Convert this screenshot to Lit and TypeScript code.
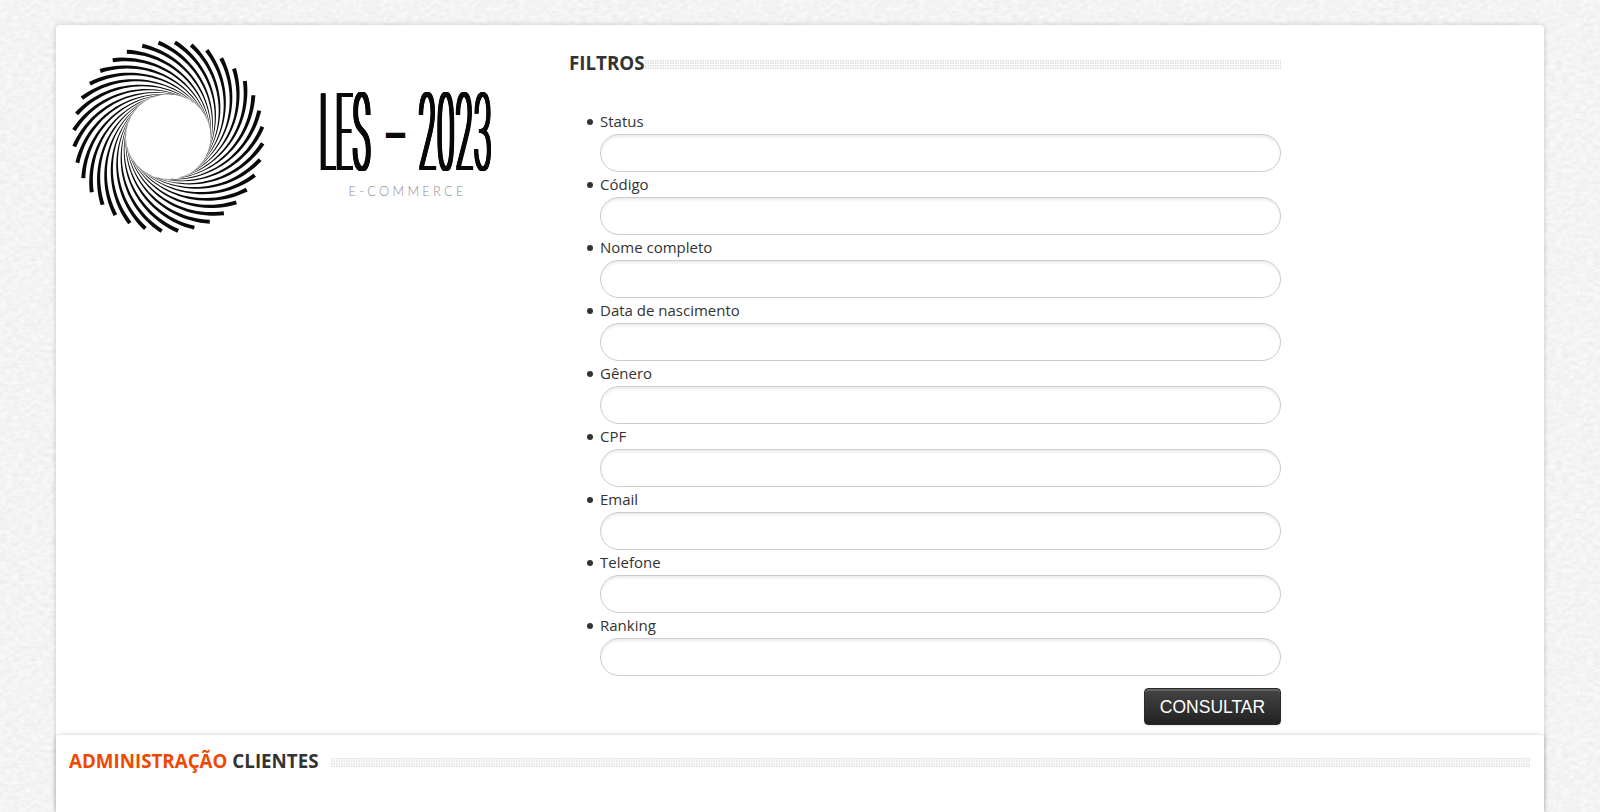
import { LitElement, html, svg, css, unsafeCSS } from "lit";
import { customElement } from "lit/decorators.js";

const FIELDS = ["Status", "Código", "Nome completo", "Data de nascimento", "Gênero", "CPF", "Email", "Telefone", "Ranking"];

const R = 94.6, INNER = 42.3, RHO = 88, D = RHO - INNER;
const TIP = Math.acos((R * R - RHO * RHO - D * D) / (2 * RHO * D));
const TIP_DEG = (Math.atan2(RHO * Math.sin(TIP), D + RHO * Math.cos(TIP)) * 180) / Math.PI;

/** One tapered blade of the swirl, starting at the rim and ending tangent to the inner ring. */
function blade(): string {
  const a: string[] = [], b: string[] = [];
  const n = 28;
  for (let i = 0; i <= n; i++) {
    const t = i / n;
    const ang = TIP + (Math.PI - TIP) * t;
    const w = 1.95 * Math.pow(1 - t, 1.1) + 0.06;
    const p = (q: number) => (D + q * Math.cos(ang)).toFixed(2) + "," + (q * Math.sin(ang)).toFixed(2);
    a.push(p(RHO + w));
    b.unshift(p(RHO - w));
  }
  return "M" + a.concat(b).join("L") + "Z";
}

/** Horizontal shadows that thicken only the vertical stems of the condensed lettering. */
const stems = (to: number) => unsafeCSS(Array.from({ length: to }, (_, i) => `${i + 1}px 0 #0a0a0a`).join(", "));

@customElement("brand-logo")
export class BrandLogo extends LitElement {
  static styles = css`
    :host { display: flex; align-items: flex-start; }
    svg { display: block; }
    .mark { flex: none; }
    .name { padding: 54px 0 0 22px; width: 200px; color: #0a0a0a; }
    .row { display: flex; height: 98px; }
    .word { display: block; white-space: nowrap; font: 200 108px/108px "Roboto", sans-serif; transform-origin: 0 0; }
    .les { width: 66px; }
    .les .word { transform: scaleX(.265); letter-spacing: 4px; text-shadow: ${stems(14)}; }
    .dash { width: 33px; font: 700 46px/102px "Open Sans", sans-serif; }
    .year { width: 76px; }
    .year .word { transform: scaleX(.292); letter-spacing: 3.8px; text-shadow: ${stems(11)}; }
    .sub { font-family: "Lato", sans-serif; font-weight: 300; font-size: 12.8px; fill: #8c8c8c; }
  `;
  render() {
    const d = blade();
    return html`
      <svg class="mark" width="240" height="230" viewBox="56 25 240 230">
        <g transform="translate(168.3 136.7)" fill="#0a0a0a">
          ${Array.from({ length: 36 }, (_, i) => svg`<path d=${d} transform="rotate(${(i * 10 - 86 - TIP_DEG).toFixed(2)})"></path>`)}
        </g>
      </svg>
      <div class="name">
        <div class="row">
          <div class="les"><span class="word">LES</span></div>
          <div class="dash">–</div>
          <div class="year"><span class="word">2023</span></div>
        </div>
        <svg width="180" height="26"><text class="sub" x="30.5" y="18.5" textLength="115" lengthAdjust="spacing">E-COMMERCE</text></svg>
      </div>`;
  }
}

@customElement("app-root")
export class AppRoot extends LitElement {
  static styles = css`
    :host {
      display: block; height: 812px; overflow: hidden; box-sizing: border-box; padding: 25px 56px 0;
      font-family: "Open Sans", sans-serif; font-size: 15px; line-height: 25px; color: #333;
      background: #f3f3f3 url("data:image/svg+xml,%3Csvg xmlns='http://www.w3.org/2000/svg' width='400' height='400'%3E%3Cfilter id='g' x='0' y='0' width='100%25' height='100%25' color-interpolation-filters='sRGB'%3E%3CfeTurbulence type='fractalNoise' baseFrequency='.16 .26' numOctaves='4' stitchTiles='stitch'/%3E%3CfeColorMatrix values='.08 0 0 0 .915 .08 0 0 0 .915 .08 0 0 0 .915 0 0 0 0 1'/%3E%3C/filter%3E%3Crect width='400' height='400' filter='url(%23g)'/%3E%3C/svg%3E");
    }
    .page { display: flex; flex-direction: column; height: 787px; background: #fff; border-radius: 4px 4px 0 0; box-shadow: 0 0 5px rgba(0,0,0,.2); }
    .top { display: flex; height: 710px; }
    .brand { width: 513px; }
    .filters { width: 712px; padding-top: 25px; box-sizing: border-box; }
    .title { margin: 0; height: 27px; font-size: 18.75px; line-height: 25px; font-weight: 700; text-transform: uppercase; display: flex; align-items: flex-start; white-space: nowrap; }
    .dots {
      flex: 1; height: 9px; margin-top: 10px;
      background: url("data:image/svg+xml,%3Csvg xmlns='http://www.w3.org/2000/svg' width='5' height='5' shape-rendering='crispEdges'%3E%3Cpath fill='%23f6f6f6' d='M0 0h4v4H0z'/%3E%3Cpath fill='%23ededed' d='M1 0h2v1H1zM1 3h2v1H1zM0 1h1v2H0zM3 1h1v2H3z'/%3E%3Cpath fill='%23dedede' d='M0 0h1v1H0zM3 0h1v1H3zM0 3h1v1H0zM3 3h1v1H3z'/%3E%3C/svg%3E");
    }
    ul { margin: 32px 0 0; padding: 0 0 0 31px; list-style: none; }
    li { height: 63px; }
    label { display: flex; align-items: center; height: 25px; }
    label::before { content: ""; width: 6px; height: 6px; margin: 1px 7px 0 -13px; border-radius: 50%; background: #333; }
    input { display: block; box-sizing: border-box; width: 100%; height: 38px; margin: 0; border: 1px solid #ccc; border-radius: 19px; background: #fff; box-shadow: inset 0 3px 3px -1px rgba(0,0,0,.08); outline: 0; padding: 0 15px; }
    .actions { display: flex; justify-content: flex-end; margin-top: 12px; }
    button { width: 137px; height: 37px; padding: 1px 0 0; border: 1px solid #2a2a2a; border-radius: 4px; color: #fff; font: 17.5px "Liberation Sans", Arial, sans-serif; background: linear-gradient(#444, #222); box-shadow: inset 0 2px 0 rgba(255,255,255,.17), 0 1px 2px rgba(0,0,0,.1); }
    .admin { flex: 1; padding: 13px 13px 0; box-shadow: 0 0 5px rgba(0,0,0,.2); border-radius: 4px 4px 0 0; }
    .accent { color: #f04800; }
    .admin .title { gap: 12px; }
  `;
  render() {
    return html`
      <main class="page">
        <section class="top">
          <brand-logo class="brand"></brand-logo>
          <div class="filters">
            <h2 class="title"><span>Filtros</span><span class="dots"></span></h2>
            <ul>${FIELDS.map((f) => html`<li><label for=${f}>${f}</label><input id=${f} type="text" /></li>`)}</ul>
            <div class="actions"><button type="button">CONSULTAR</button></div>
          </div>
        </section>
        <section class="admin">
          <h2 class="title"><span><span class="accent">Administração</span> Clientes</span><span class="dots"></span></h2>
        </section>
      </main>`;
  }
}
